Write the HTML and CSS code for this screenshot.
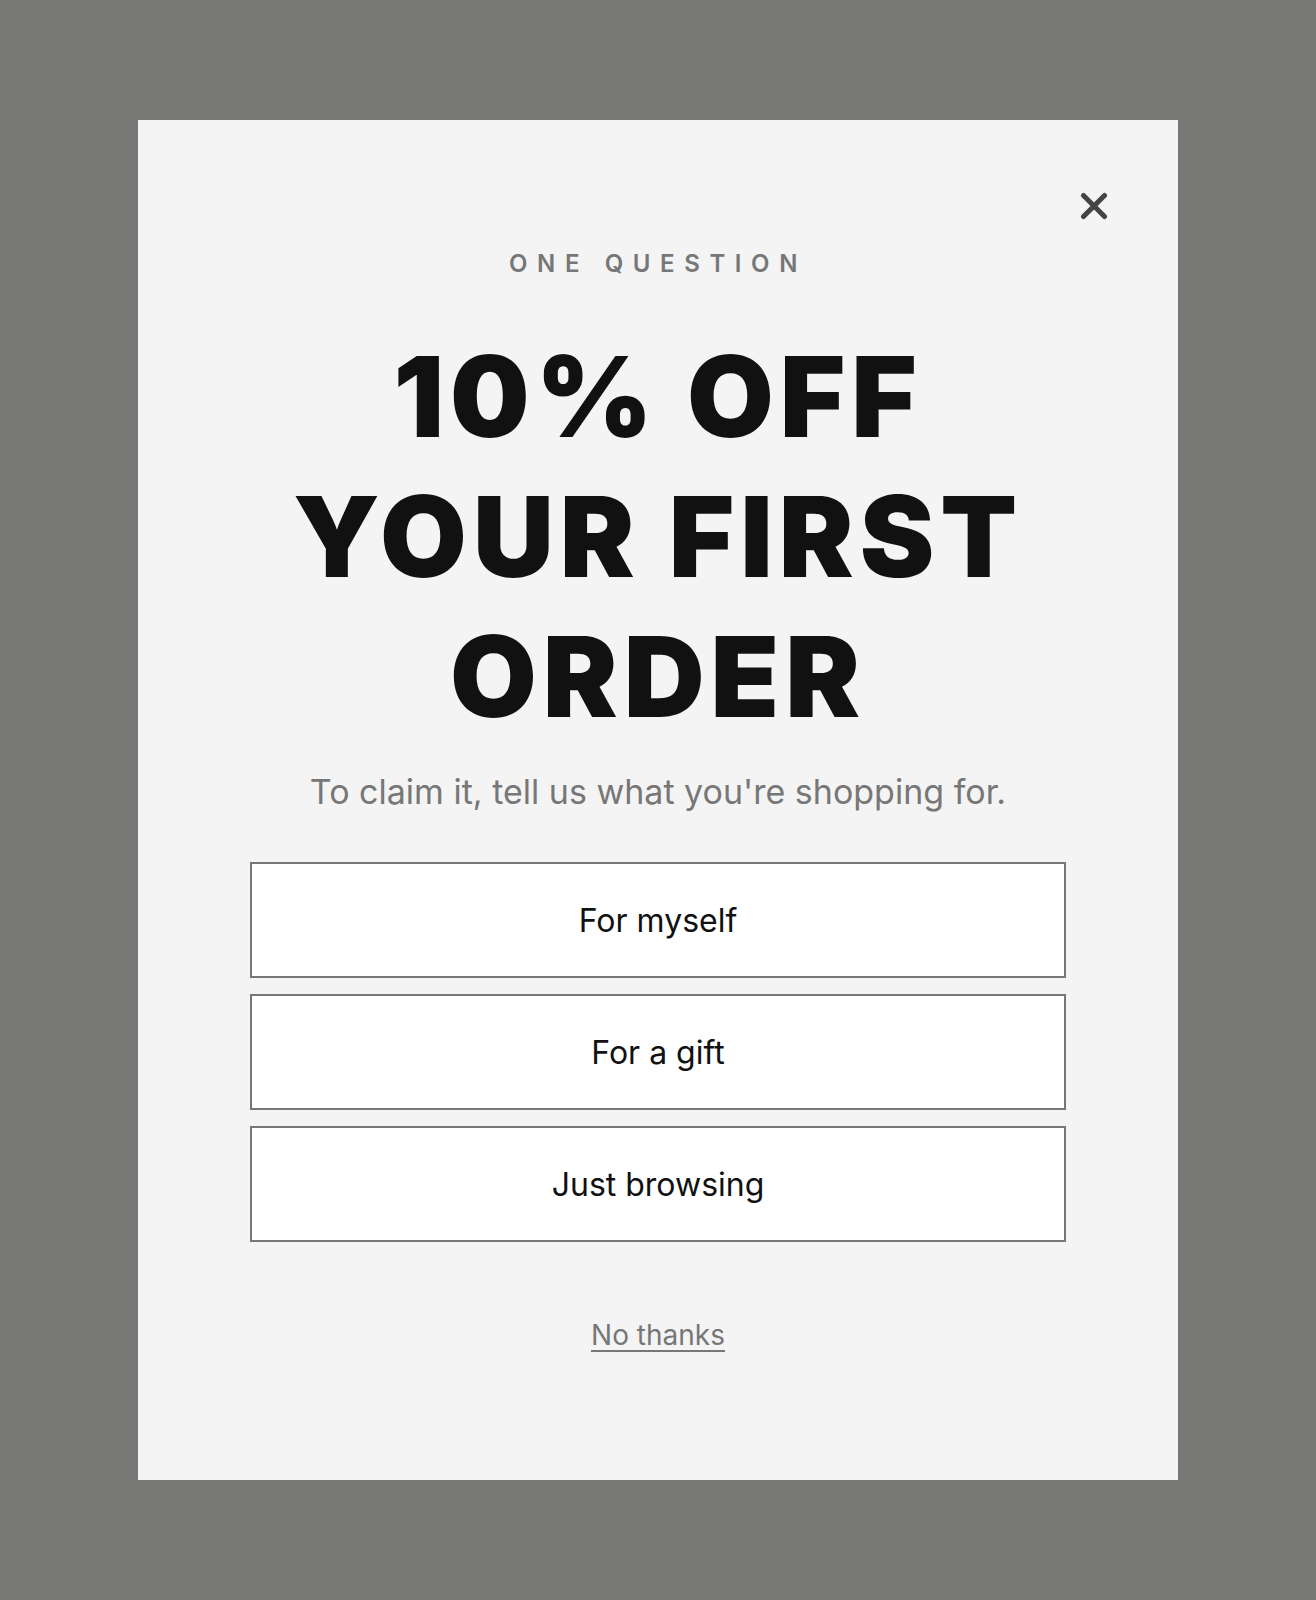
FILE: index.html
```html
<!DOCTYPE html>
<html lang="en">
<head>
<meta charset="utf-8">
<title>One question</title>
<link rel="stylesheet" href="styles.css">
</head>
<body>
<div class="modal">
  <button class="close" aria-label="Close">
    <svg width="28" height="28" viewBox="0 0 28 28"><path d="M3.5 3.5 L24.5 24.5 M24.5 3.5 L3.5 24.5" stroke="#444" stroke-width="5" stroke-linecap="round" fill="none"/></svg>
  </button>
  <div class="eyebrow">ONE QUESTION</div>
  <h1 class="headline">10% OFF<br>YOUR FIRST<br>ORDER</h1>
  <p class="sub">To claim it, tell us what you're shopping for.</p>
  <div class="options">
    <button class="option">For myself</button>
    <button class="option">For a gift</button>
    <button class="option">Just browsing</button>
  </div>
  <a class="nothanks" href="#">No thanks</a>
</div>
</body>
</html>
```
FILE: styles.css
```css
html, body {
  margin: 0;
  padding: 0;
}
body {
  background: #787876;
  height: 1600px;
  font-family: "Inter", "Liberation Sans", sans-serif;
  overflow: hidden;
}
.modal {
  position: relative;
  box-sizing: border-box;
  width: 1040px;
  height: 1360px;
  margin: 120px auto 0;
  background: #f4f4f4;
  padding: 132px 112px 0;
  display: flex;
  flex-direction: column;
  align-items: center;
}
.close {
  position: absolute;
  top: 72px;
  right: 70px;
  width: 28px;
  height: 28px;
  padding: 0;
  border: 0;
  background: none;
  cursor: pointer;
  display: block;
}
.close svg { display: block; }
.eyebrow {
  font-size: 24px;
  line-height: 24px;
  font-weight: 600;
  letter-spacing: 0.4em;
  color: #777;
}
.headline {
  margin: 50px 0 0;
  font-size: 112px;
  line-height: 140px;
  font-weight: 900;
  color: #111;
  text-align: center;
  letter-spacing: 6px;
}
.sub {
  margin: 26px 0 0;
  font-size: 34px;
  line-height: 40px;
  color: #777;
  text-align: center;
}
.options {
  margin-top: 50px;
  width: 100%;
  display: flex;
  flex-direction: column;
  gap: 16px;
}
.option {
  box-sizing: border-box;
  height: 116px;
  width: 100%;
  background: #fff;
  border: 2px solid #777;
  font-family: "Inter", "Liberation Sans", sans-serif;
  font-size: 32px;
  color: #111;
  cursor: pointer;
}
.nothanks {
  margin-top: 77px;
  font-size: 28px;
  line-height: 32px;
  color: #777;
  text-decoration: underline;
  text-underline-offset: 5px;
  text-decoration-thickness: 2px;
}
```
